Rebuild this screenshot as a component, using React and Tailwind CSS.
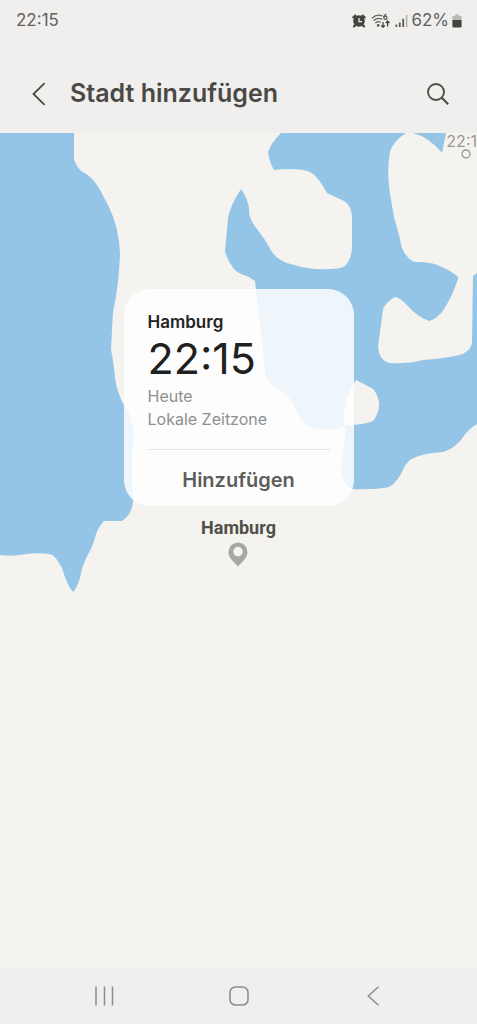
import React from "react";

const StatusIcons = () => (
  <div className="flex items-center gap-1">
    {/* alarm */}
    <svg width="16" height="16" viewBox="0 0 16 16" aria-hidden="true">
      <circle cx="8" cy="8" r="5.8" fill="#44433f" />
      <path
        d="M2.4 4.4 4.4 2.6M13.6 4.4 11.6 2.6M4 12.4 3 13.4M12 12.4l1 1"
        stroke="#44433f"
        strokeWidth="2.2"
        strokeLinecap="round"
      />
      <path d="M8 5V8.6H11" stroke="#f0efed" strokeWidth="1.3" fill="none" />
    </svg>

    {/* wifi 6 */}
    <svg width="20" height="16" viewBox="0 0 20 16" fill="none" aria-hidden="true">
      <path
        d="M1.2 5Q5.6 .8 11 2.8M3 7.4Q6.6 4.2 10.6 6.2M4.8 9.8Q7.2 7.8 9.4 9.2"
        stroke="#66655f"
        strokeWidth="1.3"
        strokeLinecap="round"
      />
      <circle cx="7.2" cy="12.4" r="1.3" fill="#55544f" />
      <path d="M15.4 1.2Q12.6 2.4 12.7 4.6" stroke="#55544f" strokeWidth="1.2" />
      <circle cx="14.4" cy="4.8" r="1.6" stroke="#55544f" strokeWidth="1.2" />
      <path
        d="M12 9v5M10.2 12.4 12 14.4l1.8-2M16.6 13.4V8.2M14.8 10l1.8-2 1.8 2"
        stroke="#44433f"
        strokeWidth="1.3"
      />
    </svg>

    {/* signal */}
    <svg width="13" height="14" viewBox="0 0 13 14" aria-hidden="true">
      <path d="M1.4 13v-2.4M4.8 13V8.6M8.2 13V4.8" stroke="#55544f" strokeWidth="1.7" />
      <path d="M11.6 13V1" stroke="#b3b2ae" strokeWidth="1.7" />
    </svg>
  </div>
);

const Battery = () => (
  <svg width="10" height="14" viewBox="0 0 10 14" aria-hidden="true">
    <path d="M3 .4h4v1.6h1.4Q9.6 2 9.6 3.2V7H.4V3.2Q.4 2 1.6 2H3z" fill="#b9b8b4" />
    <path d="M.4 6h9.2v6.2q0 1.2-1.2 1.2H1.6Q.4 13.4.4 12.2z" fill="#44433f" />
  </svg>
);

const MapBackground = () => (
  <svg
    className="absolute inset-0 h-full w-full"
    viewBox="0 133 477 835"
    preserveAspectRatio="xMidYMin slice"
    aria-hidden="true"
  >
    {/* North Sea */}
    <path
      fill="#94c5e6"
      d="M0 133H74V159Q76 166 81 171Q92 176 99 188L109 207Q119 228 120 253Q119 285 113 312L111 349Q114 366 115 378Q117 393 124 405Q135 420 133 440Q131 470 133 497Q134 513 122 521H104Q97 528 94 541L91 549Q82 564 80 578Q77 588 73 592Q67 585 62 568Q55 555 51 554.5Q35 552 20 555Q10 556 0 555Z"
    />
    {/* Baltic Sea */}
    <path
      fill="#94c5e6"
      fillRule="evenodd"
      d="M281 133H406Q393 141 390 152Q386 172 391 200L394 217L400 239Q401 249 406 255Q411 262 416 262Q432 261 444 268Q453 272 458.5 277.5Q452 298 442 312Q435 320 429 321Q416 316 407 305Q399 297 395 297Q388 300 383 309Q381 325 378 347Q379 360 389 363Q408 364 423 360Q449 358 463 354Q472 349 472 342L473 276L477 273V424Q468 429 461 440Q453 449 443 452Q421 453 410 460Q405 464 401 474Q394 485 389 487Q375 490 351 489Q338 480 342 455Q346 442 345 427Q328 433 313 428Q299 422 294 406Q290 396 280 391Q267 383 265 373Q263 350 260 327Q258 304 255 281L249 277Q237 273 234 269Q227 260 225 251L228 218Q230 206 241 189Q250 202 249 213Q251 222 257 229Q266 240 272 252Q279 262 294 265Q308 270 330 269Q341 269 345 266Q352 258 352 247V216Q351 205 344 201Q331 195 327 193Q321 182 317 178Q312 171 303 170Q290 168 274 170Q269 161 268 152Q271 143 281 133ZM356 380Q351 388 347 398Q342 418 345 425Q367 425 374 420Q380 411 379 402Q377 393 373 389Q366 385 356 380Z"
    />
    <path fill="#94c5e6" d="M413 133H446L442 153Q429 137 413 133Z" />
  </svg>
);

const CityCard = () => (
  <section className="relative w-[230px] rounded-[26px] bg-white/85 px-6 pt-5">
    <h2 className="text-[17px] leading-[26px] font-semibold text-[#242424]">Hamburg</h2>
    <p className="text-[43px] leading-[46px] text-[#202020]">22:15</p>
    <div className="pt-1 text-base leading-[23px] text-[#8f8f8f]">
      <p>Heute</p>
      <p>Lokale Zeitzone</p>
    </div>
    <div className="mt-[18px] border-t border-[#e2e3e5]">
      <button
        type="button"
        className="h-14 w-full cursor-pointer pt-1 text-xl font-semibold text-[#5e5d59]"
      >
        Hinzufügen
      </button>
    </div>
  </section>
);

const App = () => {
  return (
    <div className="flex min-h-screen flex-col bg-[#f0efed] font-['Inter','Liberation_Sans',sans-serif] text-[#4a4945]">
      <div className="flex h-[42px] items-center justify-between pr-[15px] pl-4">
        <span className="text-[17px] text-[#62615d]">22:15</span>
        <div className="flex items-center gap-[3px]">
          <StatusIcons />
          <span className="text-[17px] text-[#62615d]">62%</span>
          <Battery />
        </div>
      </div>

      <header className="flex h-[91px] items-center px-6 pt-3">
        <button type="button" aria-label="Zurück" className="flex w-[46px] cursor-pointer pl-2">
          <svg width="14" height="24" viewBox="0 0 14 24" fill="none">
            <path d="M12.6 1.2 1.5 12 12.6 22.8" stroke="#4a4945" strokeWidth="1.8" />
          </svg>
        </button>
        <h1 className="flex-1 text-[25px] font-semibold">Stadt hinzufügen</h1>
        <button type="button" aria-label="Suchen" className="cursor-pointer pr-1">
          <svg width="22" height="22" viewBox="0 0 22 22" fill="none">
            <circle cx="9" cy="9" r="8" stroke="#4a4945" strokeWidth="1.8" />
            <path d="m14.8 14.8 6.4 6.4" stroke="#4a4945" strokeWidth="2" />
          </svg>
        </button>
      </header>

      <main className="relative flex flex-1 flex-col items-center overflow-hidden bg-[#f4f3ef] pt-[156px]">
        <MapBackground />

        {/* next city on the map, at the edge */}
        <div className="absolute top-0 right-0 flex flex-col items-end text-[#999893]">
          <span className="text-base leading-4">22:1</span>
          <svg
            className="mr-1.5"
            width="10"
            height="10"
            viewBox="0 0 10 10"
            fill="none"
            aria-hidden="true"
          >
            <circle cx="5" cy="5" r="4" stroke="#999893" strokeWidth="1.3" />
          </svg>
        </div>

        <CityCard />

        <div className="relative mt-2 flex flex-col items-center">
          <span className="font-[Roboto,sans-serif] text-lg leading-7 font-bold text-[#504f4a]">
            Hamburg
          </span>
          <svg width="20" height="25" viewBox="0 0 20 25" aria-hidden="true">
            <path
              fill="#a7a6a1"
              fillRule="evenodd"
              d="M10 .5A9.5 9.5 0 0 0 .5 10C.5 16 6 20 10 24.5 14 20 19.500 16 19.500 10A9.5 9.5 0 0 0 10 .5ZM10 4.800a4.800 4.800 0 1 1 0 9.600A4.800 4.800 0 0 1 10 4.800Z"
            />
          </svg>
        </div>
      </main>

      <nav className="flex h-14 items-center justify-around px-9 text-[#8d8d8b]">
        <button type="button" aria-label="Letzte Apps" className="cursor-pointer">
          <svg width="20" height="20" viewBox="0 0 20 20" fill="none" stroke="currentColor">
            <path d="M2 .5v19M10.5 .5v19M18.5 .5v19" strokeWidth="1.5" />
          </svg>
        </button>
        <button type="button" aria-label="Startseite" className="cursor-pointer">
          <svg width="20" height="20" viewBox="0 0 20 20" fill="none" stroke="currentColor">
            <rect x="1" y="1" width="18" height="18" rx="5.5" strokeWidth="1.6" />
          </svg>
        </button>
        <button type="button" aria-label="Zurück" className="cursor-pointer">
          <svg width="20" height="20" viewBox="0 0 20 20" fill="none" stroke="currentColor">
            <path d="M14.5 .8 4.3 10 14.5 19.2" strokeWidth="1.5" />
          </svg>
        </button>
      </nav>
    </div>
  );
};

export default App;
